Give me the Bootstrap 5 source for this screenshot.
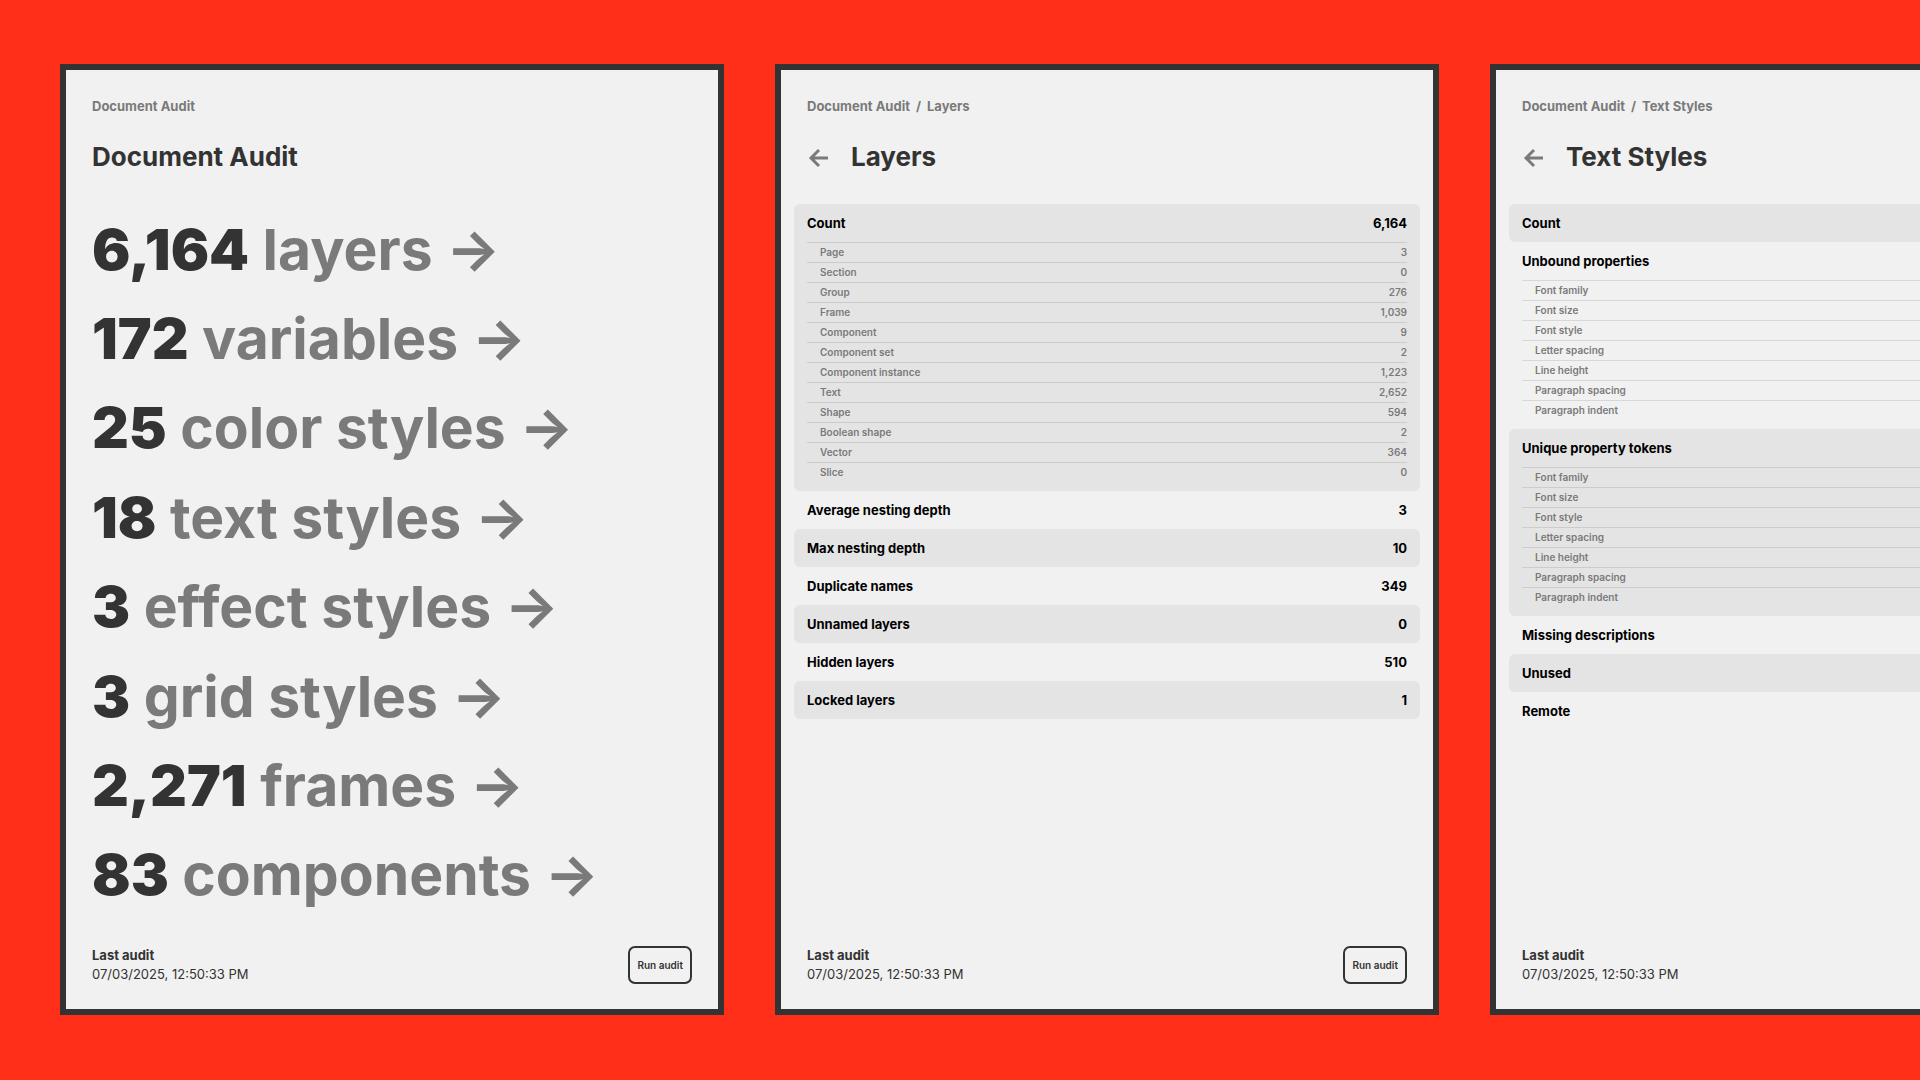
<!DOCTYPE html>
<html lang="en">
<head>
<meta charset="utf-8">
<meta name="viewport" content="width=device-width, initial-scale=1">
<title>Document Audit</title>
<link href="https://cdn.jsdelivr.net/npm/bootstrap@5.3.0/dist/css/bootstrap.min.css" rel="stylesheet">
<style>
  body { font-family: Inter, "Liberation Sans", sans-serif; background: #ff2f1a; color: #333; }
  a { text-decoration: none; color: inherit; }
  .board { min-height: 100vh; padding: 64px 0 65px 60px; gap: 51px; }
  .panel { flex: 0 0 calc(35vw - 8px); min-width: 420px; border: 6px solid #333; background: #f1f1f1; }
  .panel-head { padding: 26px 26px 31px; }
  .crumbs { font-size: 13px; line-height: 20px; font-weight: 700; color: #7a7a7a; --bs-breadcrumb-divider-color: #7a7a7a; --bs-breadcrumb-item-padding-x: 6px; margin-bottom: 25px; }
  .panel-title { font-size: 26px; line-height: 32px; font-weight: 700; margin: 0; }
  .back { width: 25px; height: 25px; margin-right: 19px; color: #7a7a7a; }
  .back svg { display: block; }
  .totals { padding-top: 1px; }
  .totals a { font-size: 57px; line-height: 64px; font-weight: 700; color: #7a7a7a; padding: 0 26px; white-space: nowrap; }
  .totals strong { font-weight: 900; color: #333; }
  .stats { padding: 0 13px; }
  .stat { padding: 0 13px; border-radius: 6px; font-size: 13px; line-height: 38px; font-weight: 700; color: #000; }
  .stat:nth-child(odd) { background: #e4e4e4; }
  .stat.has-parts { padding-bottom: 9px; }
  .parts { width: 100%; font-size: 10px; line-height: 19px; color: #7a7a7a; }
  .parts tr { border-top: 1px solid rgba(0, 0, 0, .1); }
  .parts th, .parts td { font-weight: 600; padding: 0; }
  .parts th { padding-left: 13px; }
  .parts td { text-align: right; }
  .panel-foot { padding: 26px 26px 25px; font-size: 13px; line-height: 19px; }
  .run { font-size: 10px; line-height: 18px; font-weight: 600; color: #333; border: 2px solid #333; border-radius: 7px; padding: 8px 7px; height: 38px; }
</style>
<script src="https://cdn.jsdelivr.net/npm/bootstrap@5.3.0/dist/js/bootstrap.bundle.min.js"></script>
</head>
<body>
<main class="board d-flex align-items-stretch overflow-hidden">

  <section class="panel d-flex flex-column">
    <header class="panel-head">
      <nav aria-label="Breadcrumb"><ol class="breadcrumb crumbs"><li class="breadcrumb-item">Document Audit</li></ol></nav>
      <h1 class="panel-title">Document Audit</h1>
    </header>
    <nav class="totals d-flex flex-column flex-grow-1 justify-content-around" aria-label="Totals">
      <a href="#layers"><strong>6,164</strong> layers →</a>
      <a href="#variables"><strong>172</strong> variables →</a>
      <a href="#colors"><strong>25</strong> color styles →</a>
      <a href="#text-styles"><strong>18</strong> text styles →</a>
      <a href="#effects"><strong>3</strong> effect styles →</a>
      <a href="#grids"><strong>3</strong> grid styles →</a>
      <a href="#frames"><strong>2,271</strong> frames →</a>
      <a href="#components"><strong>83</strong> components →</a>
    </nav>
    <footer class="panel-foot d-flex justify-content-between align-items-center">
      <div><div class="fw-bold">Last audit</div><div>07/03/2025, 12:50:33 PM</div></div>
      <button type="button" class="btn run">Run audit</button>
    </footer>
  </section>

  <section class="panel d-flex flex-column" id="layers">
    <header class="panel-head">
      <nav aria-label="Breadcrumb"><ol class="breadcrumb crumbs"><li class="breadcrumb-item"><a href="#">Document Audit</a></li><li class="breadcrumb-item">Layers</li></ol></nav>
      <div class="d-flex align-items-center">
        <a class="back" href="#" aria-label="Back"><svg width="25" height="25" viewBox="0 0 25 25" fill="none" stroke="currentColor" stroke-width="3"><path d="M21 13H4M12 5l-8 8 8 8"/></svg></a>
        <h2 class="panel-title">Layers</h2>
      </div>
    </header>
    <div class="stats flex-grow-1">
      <div class="stat has-parts">
        <div class="d-flex justify-content-between"><span>Count</span><span>6,164</span></div>
        <table class="parts">
          <tr><th scope="row">Page</th><td>3</td></tr>
          <tr><th scope="row">Section</th><td>0</td></tr>
          <tr><th scope="row">Group</th><td>276</td></tr>
          <tr><th scope="row">Frame</th><td>1,039</td></tr>
          <tr><th scope="row">Component</th><td>9</td></tr>
          <tr><th scope="row">Component set</th><td>2</td></tr>
          <tr><th scope="row">Component instance</th><td>1,223</td></tr>
          <tr><th scope="row">Text</th><td>2,652</td></tr>
          <tr><th scope="row">Shape</th><td>594</td></tr>
          <tr><th scope="row">Boolean shape</th><td>2</td></tr>
          <tr><th scope="row">Vector</th><td>364</td></tr>
          <tr><th scope="row">Slice</th><td>0</td></tr>
        </table>
      </div>
      <div class="stat d-flex justify-content-between"><span>Average nesting depth</span><span>3</span></div>
      <div class="stat d-flex justify-content-between"><span>Max nesting depth</span><span>10</span></div>
      <div class="stat d-flex justify-content-between"><span>Duplicate names</span><span>349</span></div>
      <div class="stat d-flex justify-content-between"><span>Unnamed layers</span><span>0</span></div>
      <div class="stat d-flex justify-content-between"><span>Hidden layers</span><span>510</span></div>
      <div class="stat d-flex justify-content-between"><span>Locked layers</span><span>1</span></div>
    </div>
    <footer class="panel-foot d-flex justify-content-between align-items-center">
      <div><div class="fw-bold">Last audit</div><div>07/03/2025, 12:50:33 PM</div></div>
      <button type="button" class="btn run">Run audit</button>
    </footer>
  </section>

  <section class="panel d-flex flex-column" id="text-styles">
    <header class="panel-head">
      <nav aria-label="Breadcrumb"><ol class="breadcrumb crumbs"><li class="breadcrumb-item"><a href="#">Document Audit</a></li><li class="breadcrumb-item">Text Styles</li></ol></nav>
      <div class="d-flex align-items-center">
        <a class="back" href="#" aria-label="Back"><svg width="25" height="25" viewBox="0 0 25 25" fill="none" stroke="currentColor" stroke-width="3"><path d="M21 13H4M12 5l-8 8 8 8"/></svg></a>
        <h2 class="panel-title">Text Styles</h2>
      </div>
    </header>
    <div class="stats flex-grow-1">
      <div class="stat">Count</div>
      <div class="stat has-parts">
        <div>Unbound properties</div>
        <table class="parts">
          <tr><th scope="row">Font family</th></tr>
          <tr><th scope="row">Font size</th></tr>
          <tr><th scope="row">Font style</th></tr>
          <tr><th scope="row">Letter spacing</th></tr>
          <tr><th scope="row">Line height</th></tr>
          <tr><th scope="row">Paragraph spacing</th></tr>
          <tr><th scope="row">Paragraph indent</th></tr>
        </table>
      </div>
      <div class="stat has-parts">
        <div>Unique property tokens</div>
        <table class="parts">
          <tr><th scope="row">Font family</th></tr>
          <tr><th scope="row">Font size</th></tr>
          <tr><th scope="row">Font style</th></tr>
          <tr><th scope="row">Letter spacing</th></tr>
          <tr><th scope="row">Line height</th></tr>
          <tr><th scope="row">Paragraph spacing</th></tr>
          <tr><th scope="row">Paragraph indent</th></tr>
        </table>
      </div>
      <div class="stat">Missing descriptions</div>
      <div class="stat">Unused</div>
      <div class="stat">Remote</div>
    </div>
    <footer class="panel-foot">
      <div class="fw-bold">Last audit</div><div>07/03/2025, 12:50:33 PM</div>
    </footer>
  </section>

</main>
</body>
</html>
